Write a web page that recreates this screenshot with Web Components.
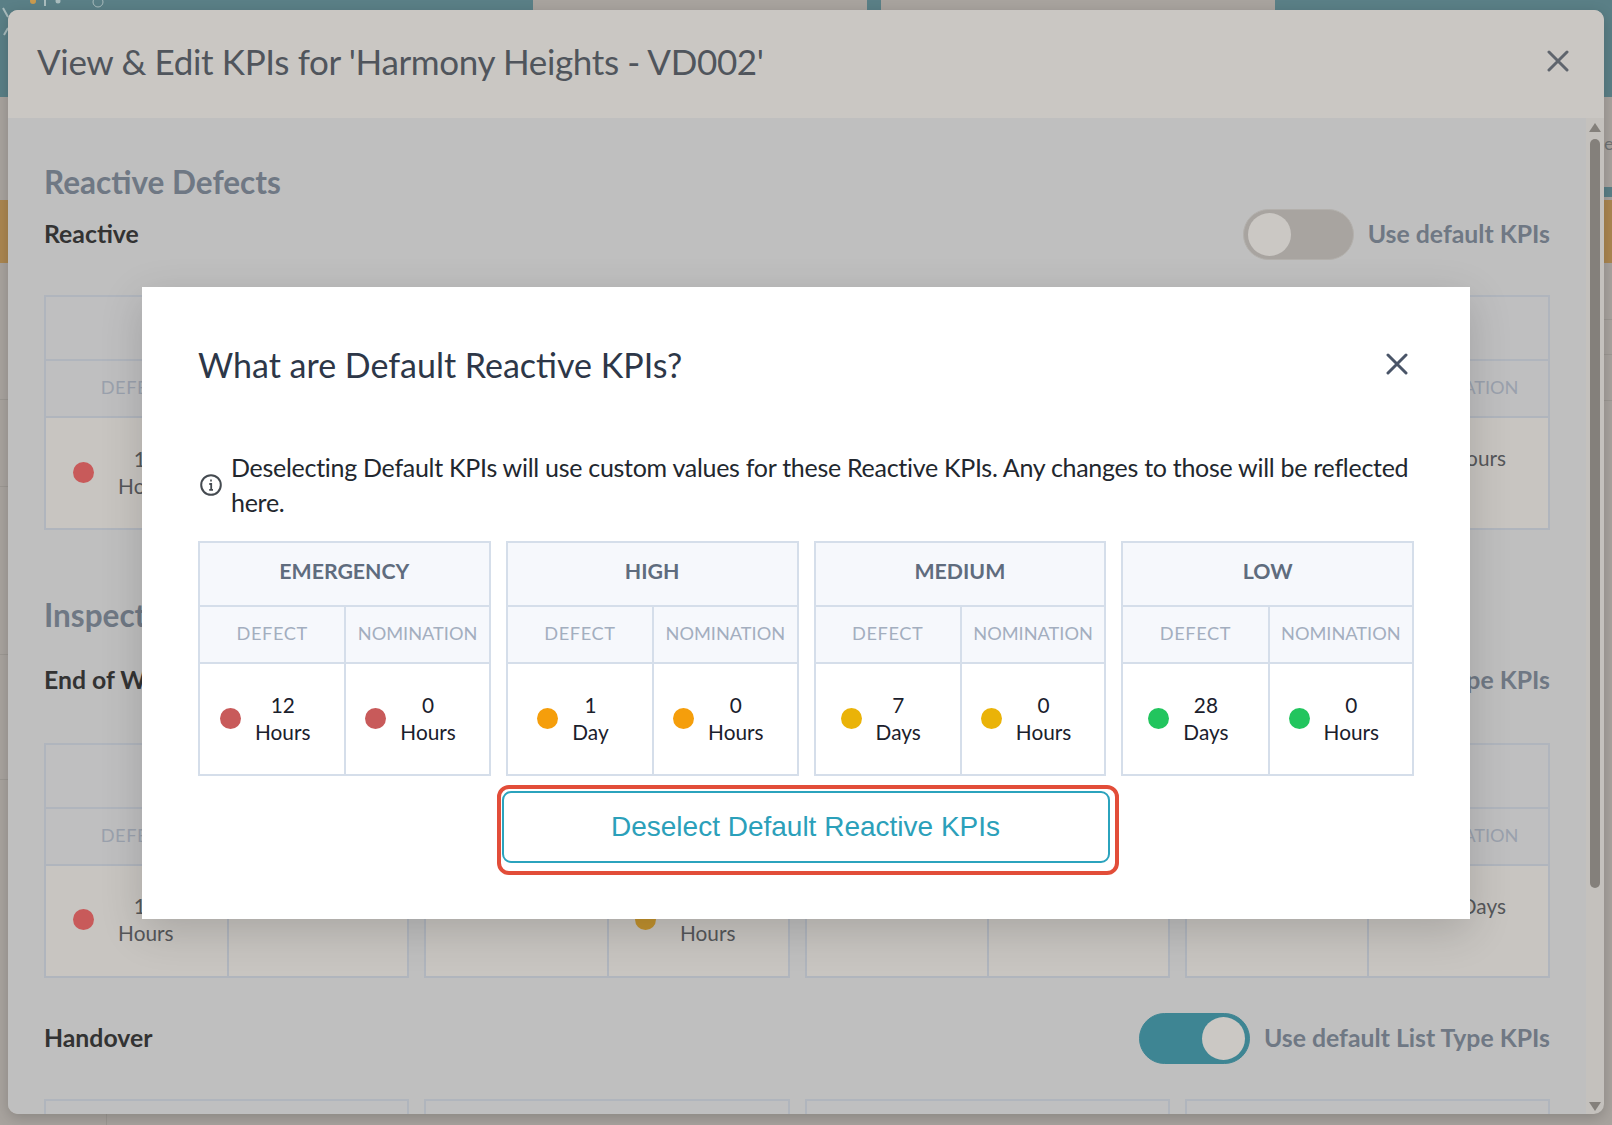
<!DOCTYPE html>
<html>
<head>
<meta charset="utf-8">
<title>KPIs</title>
<style>
	html, body { margin: 0; height: 1125px; overflow: hidden; background: #a8a39e; }
	body { font-family: Lato, "Liberation Sans", sans-serif; }
</style>
</head>
<body>
<kpi-page>
	<kpi-dialog heading="View &amp; Edit KPIs for 'Harmony Heights - VD002'">
		<kpi-section heading="Reactive Defects" label="Reactive" note="Use default KPIs" style="--head-top:44px;--row-top:7px;--table-top:35px">
			<kpi-table>
				<kpi-group label="EMERGENCY"><kpi-cell value="12" unit="Hours" tone="red"></kpi-cell><kpi-cell></kpi-cell></kpi-group>
				<kpi-group label="HIGH"><kpi-cell></kpi-cell><kpi-cell></kpi-cell></kpi-group>
				<kpi-group label="MEDIUM"><kpi-cell></kpi-cell><kpi-cell></kpi-cell></kpi-group>
				<kpi-group label="LOW"><kpi-cell></kpi-cell><kpi-cell value="0 Hours" tone="none" style="--cell-shift:-15px;justify-content:flex-end;padding-right:42px"></kpi-cell></kpi-group>
			</kpi-table>
		</kpi-section>
		<kpi-section heading="Inspections" label="End of Works" note="Use default List Type KPIs" style="--head-top:65px;--row-top:20px;--table-top:37px">
			<kpi-table>
				<kpi-group label="EMERGENCY"><kpi-cell value="12" unit="Hours" tone="red" style="padding-bottom:3px"></kpi-cell><kpi-cell></kpi-cell></kpi-group>
				<kpi-group label="HIGH"><kpi-cell></kpi-cell><kpi-cell value="1" unit="Hours" tone="amber" style="padding-bottom:3px"></kpi-cell></kpi-group>
				<kpi-group label="MEDIUM"><kpi-cell></kpi-cell><kpi-cell></kpi-cell></kpi-group>
				<kpi-group label="LOW"><kpi-cell></kpi-cell><kpi-cell value="7 Days" tone="none" style="--cell-shift:-15px;justify-content:flex-end;padding-right:42px"></kpi-cell></kpi-group>
			</kpi-table>
		</kpi-section>
		<kpi-section label="Handover" note="Use default List Type KPIs" on style="--row-top:35px;--table-top:35px">
			<kpi-table>
				<kpi-group label="EMERGENCY"></kpi-group>
				<kpi-group label="HIGH"></kpi-group>
				<kpi-group label="MEDIUM"></kpi-group>
				<kpi-group label="LOW"></kpi-group>
			</kpi-table>
		</kpi-section>
	</kpi-dialog>
	<kpi-help heading="What are Default Reactive KPIs?" action="Deselect Default Reactive KPIs">
		Deselecting Default KPIs will use custom values for these Reactive KPIs. Any changes to those will be reflected here.
		<kpi-table slot="table" class="bright">
			<kpi-group label="EMERGENCY"><kpi-cell value="12" unit="Hours" tone="red"></kpi-cell><kpi-cell value="0" unit="Hours" tone="red"></kpi-cell></kpi-group>
			<kpi-group label="HIGH"><kpi-cell value="1" unit="Day" tone="orange"></kpi-cell><kpi-cell value="0" unit="Hours" tone="orange"></kpi-cell></kpi-group>
			<kpi-group label="MEDIUM"><kpi-cell value="7" unit="Days" tone="yellow"></kpi-cell><kpi-cell value="0" unit="Hours" tone="yellow"></kpi-cell></kpi-group>
			<kpi-group label="LOW"><kpi-cell value="28" unit="Days" tone="green"></kpi-cell><kpi-cell value="0" unit="Hours" tone="green"></kpi-cell></kpi-group>
		</kpi-table>
	</kpi-help>
</kpi-page>

<script>
const closeIcon = `<svg width="22" height="22" viewBox="0 0 22 22" fill="none" stroke="currentColor" stroke-width="3" stroke-linecap="round"><path d="M2 2 20 20M20 2 2 20"/></svg>`;

class KpiPage extends HTMLElement {
	constructor() {
		super();
		this.attachShadow({ mode: 'open' });
		this.shadowRoot.innerHTML = `
		<style>
			:host { display: block; position: relative; width: 1612px; height: 1125px; overflow: hidden; }
			.top { display: flex; height: 97px; background: #5a7f86; }
			.top i { display: block; background: #a8a39e; }
			.under { display: flex; justify-content: space-between; height: 1028px; }
			.strip { display: flex; flex-direction: column; width: 9px; }
			.strip i { display: block; flex: none; border-bottom: 1px solid #9c9893; }
			.strip .orange { background: #ab8650; border: 0; }
			.strip .teal { background: #5a7f86; border: 0; }
			.strip span { font: 18px Lato, sans-serif; color: #6f7274; margin: 0 0 0 1px; height: 21px; line-height: 21px; }
			.logo { position: absolute; left: 0; top: 0; }
			.foot { position: absolute; left: 106px; bottom: 0; width: 1px; height: 11px; background: #9c9893; }
		</style>
		<div class="top">
			<div style="width:533px"></div><i style="width:334px"></i><div style="width:14px"></div><i style="width:394px"></i>
		</div>
		<div class="under">
			<div class="strip">
				<i style="height:103px;border:0"></i><i class="orange" style="height:63px"></i>
				<i style="height:136px"></i><i style="height:86px"></i><i style="height:167px"></i><i style="height:124px"></i>
			</div>
			<div class="strip">
				<span style="margin-top:36px">e</span><i style="height:33px;border:0"></i>
				<i class="teal" style="height:10px"></i><i style="height:3px;border:0"></i><i class="orange" style="height:63px"></i>
				<i style="height:56px"></i><i style="height:34px"></i><i style="height:45px"></i>
			</div>
		</div>
		<div class="foot"></div>
		<svg class="logo" width="110" height="40" viewBox="0 0 110 40" fill="none">
			<g stroke="#a9bcbd" stroke-width="2"><path d="M3 8 8 17M4 35 8 28M45 0V6"/></g>
			<circle cx="33" cy="1" r="3" fill="#c99a4f"/>
			<circle cx="58" cy="1" r="2.5" fill="#a9bcbd"/>
			<circle cx="98" cy="2" r="5" stroke="#a9bcbd" stroke-width="1"/>
		</svg>
		<slot></slot>
		`;
	}
}
customElements.define('kpi-page', KpiPage);

class KpiDialog extends HTMLElement {
	constructor() {
		super();
		this.attachShadow({ mode: 'open' });
		this.shadowRoot.innerHTML = `
		<style>
			:host { display: flex; flex-direction: column; position: absolute; left: 8px; top: 10px; width: 1596px; height: 1104px; border-radius: 10px; overflow: hidden; background: #c4c1bd; box-shadow: 0 4px 14px rgba(0,0,0,.18); }
			header { flex: none; display: flex; align-items: center; justify-content: space-between; height: 108px; padding: 0 35px 0 29px; background: #cac7c3; }
			h1 { margin: 0 0 6px; font: 400 35px/44px Lato, sans-serif; letter-spacing: -0.35px; color: #50555c; }
			button { all: unset; display: flex; color: #5f656d; margin-bottom: 6px; }
			.body { flex: 1; display: flex; min-height: 0; }
			.content { flex: none; width: 1506px; padding: 0 36px; background: #bfbfbf; overflow: hidden; }
			.bar { flex: 1; display: flex; flex-direction: column; align-items: center; padding: 5px 0 3px; }
			.thumb { width: 10px; height: 749px; margin-top: 7px; border-radius: 5px; background: #84807b; }
			.up, .down { width: 0; height: 0; border: 6px solid transparent; border-width: 0 6px 9px; border-bottom-color: #84807b; }
			.down { border-width: 9px 6px 0; border-color: #84807b transparent transparent; }
			.gap { flex: 1; }
		</style>
		<header><h1></h1><button>${closeIcon}</button></header>
		<div class="body">
			<div class="content"><slot></slot></div>
			<div class="bar"><div class="up"></div><div class="thumb"></div><div class="gap"></div><div class="down"></div></div>
		</div>
		`;
	}
	connectedCallback() {
		this.shadowRoot.querySelector('h1').textContent = this.getAttribute('heading');
	}
}
customElements.define('kpi-dialog', KpiDialog);

class KpiSection extends HTMLElement {
	constructor() {
		super();
		this.attachShadow({ mode: 'open' });
		this.shadowRoot.innerHTML = `
		<style>
			:host { display: block; }
			h2 { margin: var(--head-top, 0) 0 0; font: 700 31.5px/40px Lato, sans-serif; color: #6f7884; }
			.row { display: flex; align-items: center; margin-top: var(--row-top); height: 51px; font: 700 24.8px/30px Lato, sans-serif; }
			.row span { padding-bottom: 2px; }
			.label { flex: 1; color: #333333; }
			.note { color: #6f7884; margin-left: 14px; }
			.table { margin-top: var(--table-top); }
		</style>
		<h2></h2>
		<div class="row"><span class="label"></span><kpi-toggle></kpi-toggle><span class="note"></span></div>
		<div class="table"><slot></slot></div>
		`;
	}
	connectedCallback() {
		const h2 = this.shadowRoot.querySelector('h2');
		if (this.hasAttribute('heading')) h2.textContent = this.getAttribute('heading');
		else h2.remove();
		this.shadowRoot.querySelector('.label').textContent = this.getAttribute('label');
		this.shadowRoot.querySelector('.note').textContent = this.getAttribute('note');
		if (this.hasAttribute('on')) this.shadowRoot.querySelector('kpi-toggle').setAttribute('on', '');
	}
}
customElements.define('kpi-section', KpiSection);

class KpiToggle extends HTMLElement {
	constructor() {
		super();
		this.attachShadow({ mode: 'open' });
		this.shadowRoot.innerHTML = `
		<style>
			:host { display: flex; flex: none; align-items: center; box-sizing: border-box; width: 111px; height: 51px; padding: 0 4px; border-radius: 26px; background: #a8a4a0; border: 1px solid #b3b0ac; }
			:host([on]) { justify-content: flex-end; background: #3e8593; border-color: #3e8593; }
			div { width: 43px; height: 43px; border-radius: 50%; background: #cbc8c4; }
		</style>
		<div></div>
		`;
	}
}
customElements.define('kpi-toggle', KpiToggle);

class KpiTable extends HTMLElement {
	constructor() {
		super();
		this.attachShadow({ mode: 'open' });
		this.shadowRoot.innerHTML = `
		<style>
			:host {
				display: grid; grid-template-columns: repeat(4, 1fr); gap: 15px;
				--line: #b0b5bd; --head-bg: #bfbfc0; --body-bg: #c8c5c1; --head-ink: #6f7884; --sub-ink: #9aa1ad; --ink: #55575a;
				--head-h: 64px; --cell-gap: 24px; --cell-pad: 26px;
			}
			:host(.bright) {
				--line: #d5deea; --head-bg: #f6f8fc; --body-bg: #ffffff; --head-ink: #5f6c7e; --sub-ink: #a3aebf; --ink: #1a202c;
				--red: #f04648; --orange: #f59e0b; --yellow: #eab308; --green: #22c55e;
				--head-h: 64px; --cell-gap: 14px; --cell-pad: 14px;
			}
		</style>
		<slot></slot>
		`;
	}
}
customElements.define('kpi-table', KpiTable);

class KpiGroup extends HTMLElement {
	constructor() {
		super();
		this.attachShadow({ mode: 'open' });
		this.shadowRoot.innerHTML = `
		<style>
			:host { display: grid; grid-template-columns: 1fr 1fr; grid-template-rows: var(--head-h) 57px 110px; box-sizing: border-box; border: 2px solid var(--line); background: var(--body-bg); }
			.head, .sub { display: flex; align-items: center; justify-content: center; box-sizing: border-box; background: var(--head-bg); border-bottom: 2px solid var(--line); }
			.head { grid-column: 1 / 3; padding-bottom: 7px; font: 700 21.3px Lato, sans-serif; color: var(--head-ink); }
			.sub { padding-bottom: 3px; font: 400 18.2px Lato, sans-serif; letter-spacing: 0.6px; color: var(--sub-ink); }
			.sub.right { border-left: 2px solid var(--line); letter-spacing: 0; }
			::slotted(kpi-cell:last-of-type) { border-left: 2px solid var(--line); }
		</style>
		<div class="head"></div>
		<div class="sub">DEFECT</div>
		<div class="sub right">NOMINATION</div>
		<slot></slot>
		`;
	}
	connectedCallback() {
		this.shadowRoot.querySelector('.head').textContent = this.getAttribute('label');
	}
}
customElements.define('kpi-group', KpiGroup);

class KpiCell extends HTMLElement {
	constructor() {
		super();
		this.attachShadow({ mode: 'open' });
		this.shadowRoot.innerHTML = `
		<style>
			:host { display: flex; align-items: center; justify-content: center; gap: var(--cell-gap); padding-right: var(--cell-pad); padding-bottom: 1px; min-width: 0; font: 400 20.8px/27px Lato, sans-serif; color: var(--ink); }
			.dot { flex: none; width: 21px; height: 21px; border-radius: 50%; }
			.text { display: flex; flex-direction: column; align-items: center; position: relative; top: var(--cell-shift, -1px); }
		</style>
		<div class="dot"></div>
		<div class="text"><span class="value"></span><span class="unit"></span></div>
		`;
	}
	connectedCallback() {
		const tone = this.getAttribute('tone');
		const dot = this.shadowRoot.querySelector('.dot');
		const dim = { red: '#c85a5a', amber: '#c2922e' };
		if (!tone || tone === 'none') dot.remove();
		else dot.style.background = dim[tone] || `var(--${tone})`;
		this.shadowRoot.querySelector('.value').textContent = this.getAttribute('value') || '';
		this.shadowRoot.querySelector('.unit').textContent = this.getAttribute('unit') || '';
	}
}
customElements.define('kpi-cell', KpiCell);

class KpiHelp extends HTMLElement {
	constructor() {
		super();
		this.attachShadow({ mode: 'open' });
		this.shadowRoot.innerHTML = `
		<style>
			:host { display: block; position: absolute; left: 142px; top: 287px; box-sizing: border-box; width: 1328px; height: 632px; padding: 54px 56px 0; background: #ffffff; box-shadow: 0 12px 40px rgba(0,0,0,.16); }
			header { display: flex; align-items: flex-start; justify-content: space-between; height: 48px; }
			h2 { margin: 0; font: 400 34px/48px Lato, sans-serif; color: #2d3748; }
			button { all: unset; display: flex; color: #4a5568; margin: 12px 6px 0 0; }
			.info { display: flex; align-items: center; gap: 9px; margin-top: 61px; padding-left: 2px; font: 400 25px/35px Lato, sans-serif; letter-spacing: -0.28px; color: #22272e; }
			.info svg { flex: none; }
			.table { margin-top: 21px; }
			.mark { width: fit-content; margin: 9px 0 0 298.5px; padding: 2px 5.5px 8px 1px; border: 4.5px solid #e24d39; border-radius: 12px; }
			.action { all: unset; display: flex; align-items: center; justify-content: center; box-sizing: border-box; width: 608px; height: 72px; border: 2px solid #2ba3bd; border-radius: 9px; font: 400 28px "Liberation Sans", Arial, sans-serif; color: #2ba0ba; }
		</style>
		<header><h2></h2><button>${closeIcon}</button></header>
		<div class="info">
			<svg width="22" height="22" viewBox="0 0 22 22" fill="none" stroke="#444a50" stroke-width="2"><circle cx="11" cy="11" r="9.8"/><path stroke-width="1.8" d="M9.3 10H11.2V15.6M9.2 15.8H13"/><path d="M10.2 6.6H11.8"/></svg>
			<span><slot></slot></span>
		</div>
		<div class="table"><slot name="table"></slot></div>
		<div class="mark"><button class="action"></button></div>
		`;
	}
	connectedCallback() {
		this.shadowRoot.querySelector('h2').textContent = this.getAttribute('heading');
		this.shadowRoot.querySelector('.action').textContent = this.getAttribute('action');
	}
}
customElements.define('kpi-help', KpiHelp);
</script>
</body>
</html>
